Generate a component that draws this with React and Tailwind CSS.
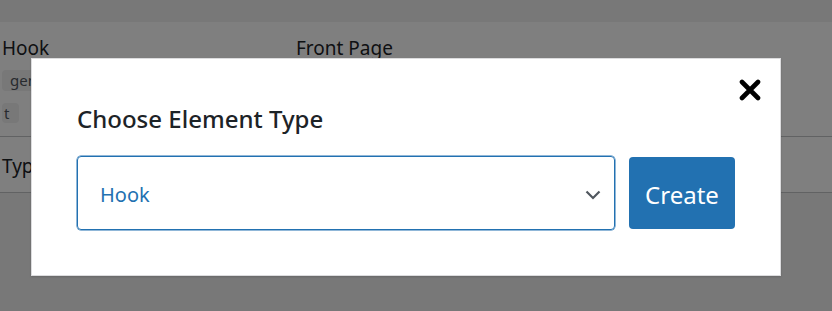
const font = { fontFamily: '"Noto Sans", "Open Sans", sans-serif' };

const Chevron = () => (
  <svg width="16" height="10" viewBox="0 0 16 10" className="text-[#50575e]">
    <path d="M1.5 1.5 L8 8 L14.5 1.5" fill="none" stroke="currentColor" strokeWidth="2.2" />
  </svg>
);

const CloseIcon = () => (
  <svg width="22" height="22" viewBox="0 0 22 22">
    <path d="M3 3 L19 19 M19 3 L3 19" stroke="#000" strokeWidth="4.6" strokeLinecap="round" />
  </svg>
);

export default function App() {
  return (
    <div className="relative w-[832px] h-[311px] overflow-hidden bg-[#f0f0f1]" style={font}>
      {/* page underneath */}
      <div className="h-[22px]" />
      <div className="bg-white">
        <div className="h-[115px] border-b border-[#c3c4c7] flex">
          <div className="w-[296px] pl-[2px] pt-[13px]">
            <div className="text-[19px] leading-[26px] text-[#1d2327]">Hook</div>
            <div className="mt-[7px]">
              <span className="inline-block bg-[#f0f0f1] rounded-[4px] pl-[8px] pr-[6px] py-[3px] text-[15px] leading-[15px] text-[#50575e]">generate_before_header</span>
            </div>
            <div className="mt-[9px]">
              <span className="inline-block bg-[#f0f0f1] rounded-[4px] px-[2px] pr-[10px] py-[3px] text-[15px] leading-[14px] text-[#50575e]">t</span>
            </div>
          </div>
          <div className="pt-[13px] text-[19px] leading-[26px] text-[#1d2327]">Front Page</div>
        </div>
        <div className="h-[56px] border-b border-[#c3c4c7] pl-[2px] pt-[16px] text-[19px] leading-[26px] text-[#1d2327]">Type</div>
      </div>

      {/* overlay */}
      <div className="absolute inset-0 bg-black/50" />

      {/* modal */}
      <div className="absolute left-[31px] top-[58px] w-[750px] h-[218px] bg-white border border-[#dcdcde] shadow-[0_1px_2px_rgba(0,0,0,0.15)]">
        <button className="absolute right-[19px] top-[20px] p-0">
          <CloseIcon />
        </button>
        <div className="pl-[45px] pt-[44px]">
          <h2 className="text-[24px] leading-[31px] text-[#1d2327] font-medium">Choose Element Type</h2>
          <div className="mt-[22px] flex items-center gap-[14px]">
            <div className="w-[538px] h-[74px] border border-[#2271b1] rounded-[4px] flex items-center justify-between pl-[22px] pr-[13px] pt-[3px] shadow-[0_0_0_0.5px_#2271b1]">
              <span className="text-[20px] text-[#2271b1]">Hook</span>
              <Chevron />
            </div>
            <button className="w-[106px] h-[72px] bg-[#2271b1] rounded-[4px] text-white text-[24px] pt-[3px]">Create</button>
          </div>
        </div>
      </div>
    </div>
  );
}
